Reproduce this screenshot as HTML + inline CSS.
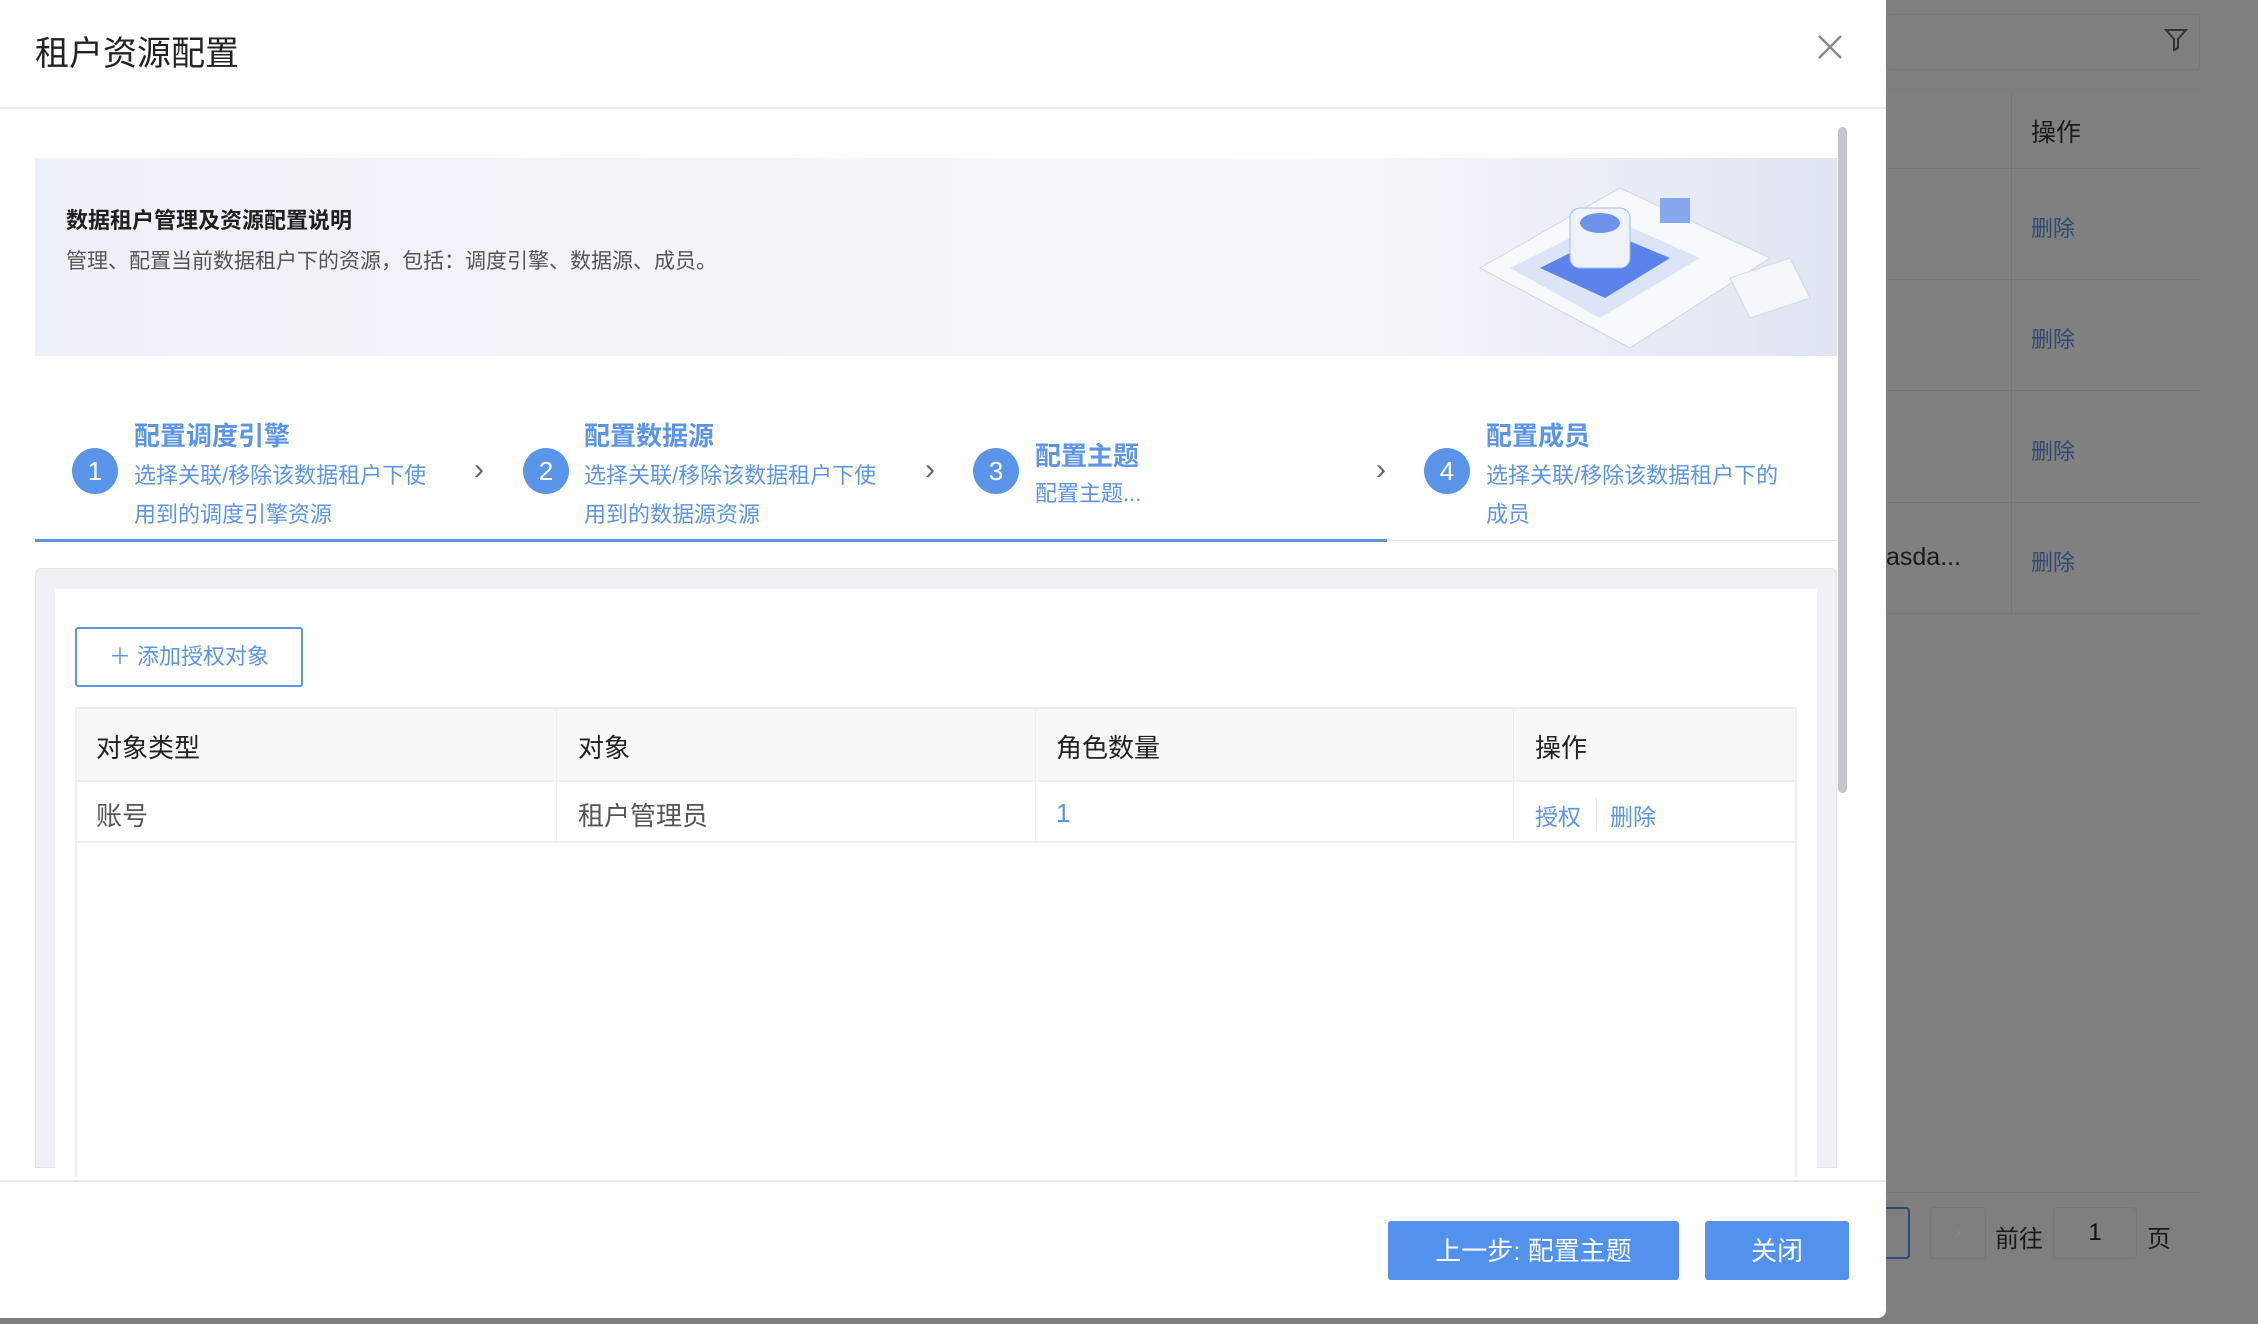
<!DOCTYPE html>
<html><head><meta charset="utf-8"><style>
*{box-sizing:border-box;margin:0;padding:0}
body{width:2258px;height:1324px;overflow:hidden;position:relative;background:#7f7f7f;font-family:"Liberation Sans","Noto Sans CJK SC",sans-serif;color:#303133}
.a{position:absolute}
.blue{color:#5b95ea}
</style></head><body>
<div class="a" style="left:1886px;top:14px;width:314px;height:56px;border:1px solid #777;border-radius:4px;background:#808080"></div>
<svg class="a" style="left:2164px;top:27px" width="24" height="26" viewBox="0 0 24 26"><path d="M2 3h20l-8 9v9l-4 2V12z" fill="none" stroke="#333" stroke-width="2"/></svg>
<div class="a" style="left:1886px;top:92px;width:314px;height:522px;background:#808080;border-left:1px solid #777"></div>
<div class="a" style="left:2011px;top:92px;width:1px;height:522px;background:#767676"></div>
<div class="a" style="left:2031px;top:113px;font-size:25px;color:#1a1a1a">操作</div>
<div class="a" style="left:1886px;top:168px;width:314px;height:1px;background:#767676"></div>
<div class="a" style="left:1886px;top:279px;width:314px;height:1px;background:#767676"></div>
<div class="a" style="left:1886px;top:390px;width:314px;height:1px;background:#767676"></div>
<div class="a" style="left:1886px;top:502px;width:314px;height:1px;background:#767676"></div>
<div class="a" style="left:1886px;top:613px;width:314px;height:1px;background:#767676"></div>
<div class="a" style="left:2031px;top:211px;font-size:22px;color:#2e4a75">删除</div>
<div class="a" style="left:2031px;top:322px;font-size:22px;color:#2e4a75">删除</div>
<div class="a" style="left:2031px;top:434px;font-size:22px;color:#2e4a75">删除</div>
<div class="a" style="left:2031px;top:545px;font-size:22px;color:#2e4a75">删除</div>
<div class="a" style="left:1886px;top:543px;font-size:25px;color:#1a1a1a">asda...</div>
<div class="a" style="left:1886px;top:1192px;width:314px;height:1px;background:#767676"></div>
<div class="a" style="left:1886px;top:1207px;width:24px;height:52px;border:2px solid #2e4a75;border-left:none;border-radius:0 4px 4px 0"></div>
<div class="a" style="left:1930px;top:1207px;width:56px;height:52px;border:1px solid #777;border-radius:4px;color:#888;text-align:center;line-height:50px">›</div>
<div class="a" style="left:1995px;top:1219px;font-size:24px;color:#1a1a1a">前往</div>
<div class="a" style="left:2053px;top:1207px;width:84px;height:52px;border:1px solid #777;border-radius:4px;text-align:center;line-height:50px;font-size:24px;color:#111">1</div>
<div class="a" style="left:2147px;top:1219px;font-size:24px;color:#1a1a1a">页</div>

<div class="a" style="left:0;top:0;width:1886px;height:1318px;background:#fff;border-radius:0 0 8px 0;overflow:hidden">
  <div class="a" style="left:35px;top:26px;font-size:34px;color:#222">租户资源配置</div>
  <svg class="a" style="left:1816px;top:33px" width="28" height="28" viewBox="0 0 28 28"><path d="M3 3L25 25M25 3L3 25" stroke="#888" stroke-width="2.4"/></svg>
  <div class="a" style="left:0;top:107px;width:1886px;height:2px;background:#e8e9ec"></div>

  <div class="a" style="left:35px;top:158px;width:1802px;height:198px;background:linear-gradient(90deg,#eef1f8,#f5f7fb 70%,#e9edf6)"></div>
  <svg class="a" style="left:1370px;top:158px" width="467" height="198" viewBox="0 0 467 198">
    <defs><linearGradient id="g" x1="0" x2="1"><stop offset="0" stop-color="#f4f6fb"/><stop offset="1" stop-color="#dfe5f1"/></linearGradient></defs>
    <rect width="467" height="198" fill="url(#g)"/>
    <path d="M110 110L250 30L400 100L260 190Z" fill="#f8f9fc" stroke="#d0d6e4"/>
    <path d="M140 110L240 60L330 100L230 160Z" fill="#dce4f6"/>
    <path d="M170 110L240 75L300 100L235 140Z" fill="#5a84ea"/>
    <rect x="200" y="50" width="60" height="60" rx="10" fill="#eef2fb" stroke="#a9bbe6"/>
    <ellipse cx="230" cy="65" rx="20" ry="10" fill="#6f93ec"/>
    <rect x="290" y="40" width="30" height="25" fill="#86a6ee"/>
    <path d="M360 120L420 100L440 140L380 160Z" fill="#f5f7fb" stroke="#d3d9e7"/>
  </svg>
  <div class="a" style="left:66px;top:203px;font-size:22px;font-weight:bold;color:#1f1f1f">数据租户管理及资源配置说明</div>
  <div class="a" style="left:66px;top:245px;font-size:21px;color:#555">管理、配置当前数据租户下的资源，包括：调度引擎、数据源、成员。</div>

  <div class="a" style="left:35px;top:539px;width:1352px;height:3px;background:#5b95ea"></div>
  <div class="a" style="left:1387px;top:540px;width:450px;height:1px;background:#e4e7ed"></div>
  <div class="a" style="left:72px;top:448px;width:46px;height:46px;border-radius:50%;background:#5b95ea;color:#fff;text-align:center;line-height:46px;font-size:26px">1</div>
  <div class="a blue" style="left:134px;top:416px;font-size:26px;font-weight:bold">配置调度引擎</div>
  <div class="a blue" style="left:134px;top:456px;font-size:22px;line-height:39px;white-space:nowrap">选择关联/移除该数据租户下使<br>用到的调度引擎资源</div>
  <div class="a" style="left:474px;top:453px;font-size:30px;color:#666">›</div>
  <div class="a" style="left:523px;top:448px;width:46px;height:46px;border-radius:50%;background:#5b95ea;color:#fff;text-align:center;line-height:46px;font-size:26px">2</div>
  <div class="a blue" style="left:584px;top:416px;font-size:26px;font-weight:bold">配置数据源</div>
  <div class="a blue" style="left:584px;top:456px;font-size:22px;line-height:39px;white-space:nowrap">选择关联/移除该数据租户下使<br>用到的数据源资源</div>
  <div class="a" style="left:925px;top:453px;font-size:30px;color:#666">›</div>
  <div class="a" style="left:973px;top:448px;width:46px;height:46px;border-radius:50%;background:#5b95ea;color:#fff;text-align:center;line-height:46px;font-size:26px">3</div>
  <div class="a blue" style="left:1035px;top:436px;font-size:26px;font-weight:bold">配置主题</div>
  <div class="a blue" style="left:1035px;top:476px;font-size:22px">配置主题...</div>
  <div class="a" style="left:1376px;top:453px;font-size:30px;color:#666">›</div>
  <div class="a" style="left:1424px;top:448px;width:46px;height:46px;border-radius:50%;background:#5b95ea;color:#fff;text-align:center;line-height:46px;font-size:26px">4</div>
  <div class="a blue" style="left:1486px;top:416px;font-size:26px;font-weight:bold">配置成员</div>
  <div class="a blue" style="left:1486px;top:456px;font-size:22px;line-height:39px;white-space:nowrap">选择关联/移除该数据租户下的<br>成员</div>

  <div class="a" style="left:35px;top:568px;width:1802px;height:600px;background:#f0f1f4;border:1px solid #e3e5ea;border-radius:6px 6px 0 0"></div>
  <div class="a" style="left:55px;top:589px;width:1762px;height:580px;background:#fff"></div>
  <div class="a blue" style="left:75px;top:627px;width:228px;height:60px;border:2px solid #5b95ea;border-radius:3px;font-size:22px;line-height:56px;text-align:center">＋ 添加授权对象</div>
  <div class="a" style="left:75px;top:707px;width:1722px;height:470px;border:2px solid #eceef2;border-bottom:none"></div>
  <div class="a" style="left:77px;top:709px;width:1718px;height:73px;background:#f8f8f9;border-bottom:2px solid #eceef2"></div>
  <div class="a" style="left:77px;top:841px;width:1718px;height:2px;background:#eceef2"></div>
  <div class="a" style="left:556px;top:709px;width:1px;height:133px;background:#eceef2"></div>
  <div class="a" style="left:1035px;top:709px;width:1px;height:133px;background:#eceef2"></div>
  <div class="a" style="left:1513px;top:709px;width:1px;height:133px;background:#eceef2"></div>
  <div class="a" style="left:96px;top:728px;font-size:26px;color:#222">对象类型</div>
  <div class="a" style="left:578px;top:728px;font-size:26px;color:#222">对象</div>
  <div class="a" style="left:1056px;top:728px;font-size:26px;color:#222">角色数量</div>
  <div class="a" style="left:1535px;top:728px;font-size:26px;color:#222">操作</div>
  <div class="a" style="left:96px;top:796px;font-size:26px;color:#555">账号</div>
  <div class="a" style="left:578px;top:796px;font-size:26px;color:#555">租户管理员</div>
  <div class="a blue" style="left:1056px;top:798px;font-size:26px">1</div>
  <div class="a blue" style="left:1535px;top:798px;font-size:23px">授权</div>
  <div class="a" style="left:1596px;top:798px;width:1px;height:32px;background:#e3e5ea"></div>
  <div class="a blue" style="left:1610px;top:798px;font-size:23px">删除</div>

  <div class="a" style="left:1838px;top:127px;width:9px;height:666px;border-radius:5px;background:#c4c6cb"></div>

  <div class="a" style="left:0;top:1180px;width:1886px;height:2px;background:#e8e9ec"></div>
  <div class="a" style="left:1388px;top:1221px;width:291px;height:59px;background:#5291ee;border-radius:3px;color:#fff;font-size:26px;text-align:center;line-height:61px">上一步: 配置主题</div>
  <div class="a" style="left:1705px;top:1221px;width:144px;height:59px;background:#5291ee;border-radius:3px;color:#fff;font-size:26px;text-align:center;line-height:61px">关闭</div>
</div>
</body></html>
